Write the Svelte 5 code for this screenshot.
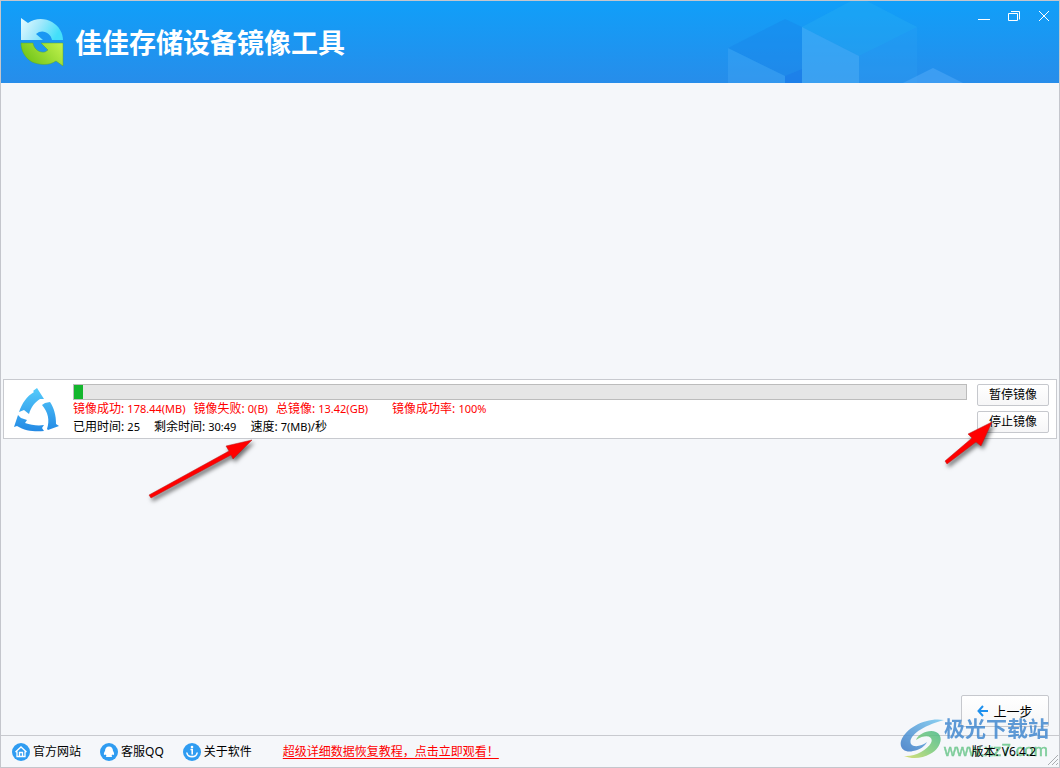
<script lang="ts">
  let paused = $state(false)

  const progress = 1

  const results = [
    { label: '镜像成功', value: '178.44(MB)' },
    { label: '镜像失败', value: '0(B)' },
    { label: '总镜像', value: '13.42(GB)' },
    { label: '镜像成功率', value: '100%' }
  ]
</script>

<div class="window">
  <header class="titlebar">
    <svg class="cubes" width="240" height="82" viewBox="723 1 240 82" aria-hidden="true">
      <path d="M728 48L785 19L802 27V69L785 76Z" fill="#1682e8" opacity=".35" />
      <path d="M728 48L785 76V83H728Z" fill="#4bacf6" opacity=".35" />
      <path d="M785 76L802 69V83H785Z" fill="#1b7de8" opacity=".8" />
      <path d="M802 27L851 1H867L917 27L859 56Z" fill="#2cb3f2" opacity=".3" />
      <path d="M802 27L859 56V83H802Z" fill="#50b3f7" opacity=".5" />
      <path d="M859 56L917 27V83H859Z" fill="#30a2f4" opacity=".25" />
      <path d="M903 83L933 68L963 83Z" fill="#51aaf8" opacity=".55" />
    </svg>

    <svg class="logo" width="44" height="50" viewBox="0 0 44 50" aria-hidden="true">
      <defs>
        <linearGradient id="logo-blue" x1="0" x2="1" y1="0" y2=".3">
          <stop offset="0" stop-color="#e8fbff" />
          <stop offset=".5" stop-color="#a2e8fc" />
          <stop offset="1" stop-color="#43dffa" />
        </linearGradient>
        <linearGradient id="logo-green" x1="0" x2="1" y1=".5" y2="0">
          <stop offset="0" stop-color="#72c51a" />
          <stop offset="1" stop-color="#c3f34e" />
        </linearGradient>
      </defs>
      <path
        d="M1 1L8 6C15 1 25 1 32 5C39 9 43 16 43 23H32C31 17 25 13 19 15L16 17L23 23H1Z"
        fill="url(#logo-blue)"
      />
      <path
        d="M43 49L36 44C29 49 19 48 12 45C5 41 1 34 1 26H13C14 32 19 36 25 35L28 33L21 26H43Z"
        fill="url(#logo-green)"
        stroke="#58a72c"
        stroke-width=".5"
      />
    </svg>
    <h1>佳佳存储设备镜像工具</h1>

    <div class="controls">
      <button aria-label="最小化">
        <svg width="12" height="12" viewBox="0 0 12 12"><path d="M0 9.5h12" /></svg>
      </button>
      <button aria-label="还原">
        <svg width="12" height="12" viewBox="0 0 12 12">
          <path d="M.5 3.5h9v7h-9zM3 1.5h8.500v8" />
        </svg>
      </button>
      <button aria-label="关闭">
        <svg width="12" height="12" viewBox="0 0 12 12"><path d="M1 1l10 10M11 1L1 11" /></svg>
      </button>
    </div>
  </header>

  <main>
    <section class="task">
      <svg class="cycle" width="46" height="44" viewBox="0 0 46 44" aria-hidden="true">
        <defs>
          <linearGradient id="cycle-fill" x2="0" y2="44" gradientUnits="userSpaceOnUse">
            <stop offset="0" stop-color="#55ccfb" />
            <stop offset="1" stop-color="#2388e4" />
          </linearGradient>
        </defs>
        <g fill="url(#cycle-fill)">
          <path d="M24 0L31 11L27 11C22 14 18 19 16 26L11 22L6 24C9 15 14 8 21 4L20 3Z" />
          <path d="M29 17L32 15L37 14C41 20 43 27 43 36L46 38L35 42L34 41C37 32 35 24 29 17Z" />
          <path d="M1 39L5 27L8 30L14 32L12 35C18 37 25 38 31 37L29 40L31 43C22 44 12 43 4 38Z" />
        </g>
      </svg>

      <div class="status">
        <progress value={progress} max="100" aria-label="镜像进度"></progress>
        <div class="line result">
          {#each results as item}
            <span>{item.label}: <b>{item.value}</b></span>
          {/each}
        </div>
        <div class="line timing">
          <span>已用时间: <b>25</b></span>
          <span>剩余时间: <b>30:49</b></span>
          <span>速度: <b>7(MB)/</b>秒</span>
        </div>
      </div>

      <div class="actions">
        <button class="btn" onclick={() => (paused = !paused)}>{paused ? '继续镜像' : '暂停镜像'}</button>
        <button class="btn">停止镜像</button>
      </div>

      <svg class="arrow arrow-speed" width="112" height="68" viewBox="0 0 112 68" aria-hidden="true">
        <path d="M3 58L83 14L80 9L106 3L87 22L85 18L5 61Z" />
      </svg>
      <svg class="arrow arrow-stop" width="60" height="54" viewBox="0 0 60 54" aria-hidden="true">
        <path d="M3 43L30 20L26 16L50 4L39 28L34 24L5 46Z" />
      </svg>
    </section>

    <div class="nav">
      <button class="btn back">
        <svg width="12" height="12" viewBox="0 0 12 12" aria-hidden="true">
          <path d="M6 1L1.500 6L6 11M2 6h9" fill="none" stroke="#1f91ee" stroke-width="2" />
        </svg>
        上一步
      </button>
    </div>
  </main>

  <footer>
    <a class="link" href="#site">
      <svg width="18" height="18" viewBox="0 0 18 18" aria-hidden="true">
        <circle cx="9" cy="9" r="9" fill="#2f9cf1" />
        <path
          d="M3.500 9L9 4L14.500 9M5 8.500V13.500H13V8.500M7.500 13V9.500H10.500V13"
          fill="none"
          stroke="#fff"
          stroke-width="1.3"
        />
      </svg>
      官方网站
    </a>
    <a class="link" href="#qq">
      <svg width="18" height="18" viewBox="0 0 18 18" aria-hidden="true">
        <circle cx="9" cy="9" r="9" fill="#2f9cf1" />
        <path
          d="M9 3.500C6.500 3.500 5 5.500 5 8C4 9.500 3.500 11 4.200 12L5.500 11.500L6.500 12.800L5.800 14H12.200L11.500 12.800L12.500 11.500L13.800 12C14.500 11 14 9.500 13 8C13 5.500 11.500 3.500 9 3.500Z"
          fill="#fff"
        />
      </svg>
      客服QQ
    </a>
    <a class="link" href="#about">
      <svg width="18" height="18" viewBox="0 0 18 18" aria-hidden="true">
        <circle cx="9" cy="9" r="9" fill="#2f9cf1" />
        <circle cx="9" cy="4" r="1.300" fill="#fff" />
        <path d="M7.500 6.500H9.200V11.500M4 9.500C3 15 15 15 14 9.500" fill="none" stroke="#fff" stroke-width="1.600" />
      </svg>
      关于软件
    </a>
    <a class="tutorial" href="#tutorial">超级详细数据恢复教程，点击立即观看！</a>
    <span class="version">版本: V6.4.2</span>
    <svg class="grip" width="10" height="10" viewBox="0 0 10 10" aria-hidden="true">
      <path d="M0 10L10 0M4 10L10 4M8 10L10 8" stroke="#a9adb1" />
    </svg>
  </footer>

  <div class="watermark">
    <svg width="44" height="42" viewBox="0 0 44 42" aria-hidden="true">
      <defs>
        <linearGradient id="wm-blue" x1="0" x2="1" y1="1" y2="0">
          <stop offset="0" stop-color="#3976c4" />
          <stop offset="1" stop-color="#78caf0" />
        </linearGradient>
        <linearGradient id="wm-green" x1="0" x2="1" y1="1" y2="0">
          <stop offset="0" stop-color="#d6dc62" />
          <stop offset=".5" stop-color="#7dcc78" />
          <stop offset="1" stop-color="#48b987" />
        </linearGradient>
      </defs>
      <path
        d="M44 2C27 -1 6 9 1 23C-1 31 6 35 13 33C20 32 25 28 27 24C22 28 14 30 11 26C8 20 18 9 44 2Z"
        fill="url(#wm-blue)"
      />
      <path
        d="M16 22C18 16 29 11 36 14C45 18 40 31 30 36C22 41 11 41 4 38C15 39 27 32 31 25C34 19 27 15 16 22Z"
        fill="url(#wm-green)"
      />
    </svg>
    <div>
      <div class="wm-name">极光下载站</div>
      <div class="wm-url">www.xz7.com</div>
    </div>
  </div>
</div>

<style>
  :global(body) {
    margin: 0;
  }

  .window {
    position: relative;
    box-sizing: border-box;
    min-height: 100vh;
    display: flex;
    flex-direction: column;
    border: 1px solid #c4c6cc;
    background: #f5f7fa;
    color: #000;
    font-family: 'Noto Sans', 'Noto Sans CJK SC', sans-serif;
    font-size: 12px;
    line-height: 18px;
  }

  button {
    font: inherit;
    color: inherit;
    cursor: pointer;
  }

  /* Title bar */
  .titlebar {
    position: relative;
    display: flex;
    align-items: center;
    gap: 11px;
    height: 82px;
    padding-left: 19px;
    background: linear-gradient(#109ff9, #278dea);
  }

  .cubes {
    position: absolute;
    top: 0;
    right: 96px;
  }

  .titlebar h1 {
    margin: 0;
    color: #fff;
    font-size: 27px;
    font-weight: 700;
    line-height: 40px;
    font-family: 'Noto Sans CJK SC', sans-serif;
  }

  .controls {
    position: relative;
    display: flex;
    align-self: flex-start;
    gap: 6px;
    margin-left: auto;
    padding: 3px;
  }

  .controls button {
    display: flex;
    align-items: center;
    justify-content: center;
    width: 24px;
    height: 24px;
    padding: 0;
    border: none;
    background: transparent;
  }

  .controls path {
    fill: none;
    stroke: #fff;
  }

  /* Content */
  main {
    flex: 1;
    display: grid;
    grid-template-rows: 1fr auto 1fr;
  }

  .task {
    position: relative;
    grid-row: 2;
    display: flex;
    margin: 0 2px;
    padding: 4px 7px 2px 9px;
    border: 1px solid #c8cacf;
    background: #fff;
  }

  .cycle {
    flex-shrink: 0;
    margin: 4px 14px 0 0;
  }

  .status {
    flex: 1;
    min-width: 0;
  }

  progress {
    display: block;
    box-sizing: border-box;
    width: 100%;
    height: 16px;
    border: 1px solid #bcbcbc;
    background: #e6e6e6;
    appearance: none;
  }

  progress::-webkit-progress-bar {
    background: #e6e6e6;
  }

  progress::-webkit-progress-value {
    background: #13b62d;
  }

  .line {
    display: flex;
    white-space: nowrap;
  }

  .line b {
    font-size: 11px;
    font-weight: 400;
  }

  .result {
    gap: 8px;
    color: #f00;
  }

  .result span:last-child {
    margin-left: 16px;
  }

  .timing {
    gap: 14px;
  }

  .actions {
    display: flex;
    flex-direction: column;
    gap: 5px;
    margin-left: 10px;
  }

  .btn {
    width: 72px;
    height: 22px;
    padding: 0;
    border: 1px solid #c6c8cd;
    border-radius: 2px;
    background: linear-gradient(#fff, #f6f6f7);
  }

  .arrow {
    position: absolute;
    pointer-events: none;
    filter: drop-shadow(2px 3px 2px rgba(0, 0, 0, 0.55));
  }

  .arrow path {
    fill: #f00;
    stroke: #b51a1a;
    stroke-width: 0.5;
  }

  .arrow-speed {
    top: 57px;
    left: 142px;
  }

  .arrow-stop {
    top: 38px;
    right: 54px;
  }

  .nav {
    grid-row: 3;
    display: flex;
    align-items: flex-end;
    justify-content: flex-end;
    padding: 0 10px 8px;
  }

  .back {
    display: flex;
    align-items: center;
    justify-content: center;
    gap: 4px;
    width: 88px;
    height: 32px;
    font-size: 13px;
  }

  /* Footer */
  footer {
    display: flex;
    align-items: center;
    height: 31px;
    padding-left: 11px;
    border-top: 1px solid #c8cacf;
  }

  .link {
    display: flex;
    align-items: center;
    gap: 3px;
    margin-right: 19px;
    color: #000;
    text-decoration: none;
  }

  .tutorial {
    margin-left: 12px;
    color: #f00;
    text-underline-offset: 2px;
  }

  .version {
    position: relative;
    z-index: 1;
    margin-left: auto;
  }

  .grip {
    align-self: flex-end;
    margin: 0 1px 2px 12px;
  }

  .watermark {
    position: absolute;
    right: 10px;
    bottom: 6px;
    display: flex;
    align-items: center;
    pointer-events: none;
    font-family: 'Liberation Sans', 'Noto Sans CJK SC', sans-serif;
    opacity: 0.85;
  }

  .wm-name {
    color: #4389d0;
    font-size: 21px;
    font-weight: 700;
    line-height: 24px;
  }

  .wm-url {
    color: #69c58a;
    font-size: 17px;
    line-height: 20px;
    -webkit-text-stroke: 0.5px #69c58a;
  }
</style>
